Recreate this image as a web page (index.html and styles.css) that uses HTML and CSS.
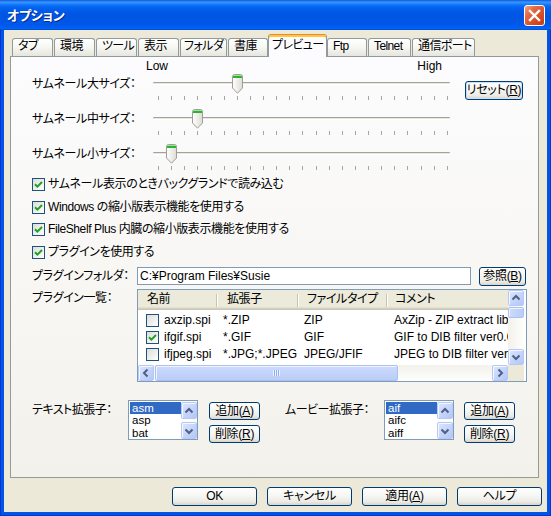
FILE: index.html
```html
<!DOCTYPE html>
<html lang="ja">
<head>
<meta charset="utf-8">
<title>オプション</title>
<link rel="stylesheet" href="styles.css">
</head>
<body>
<div class="window">
  <div class="titlebar">
    <span class="title">オプション</span>
    <div class="close"><svg width="19" height="19" viewBox="0 0 19 19"><path d="M5 5 L14 14 M14 5 L5 14" stroke="#fff" stroke-width="2.4" stroke-linecap="square"/></svg></div>
  </div>
  <div class="frame">
    <div class="client">
      <div class="tabs">
        <div class="tab">タブ</div>
        <div class="tab">環境</div>
        <div class="tab">ツール</div>
        <div class="tab">表示</div>
        <div class="tab w47">フォルダ</div>
        <div class="tab w40">書庫</div>
        <div class="tab active">プレビュー</div>
        <div class="tab w40">Ftp</div>
        <div class="tab w43">Telnet</div>
        <div class="tab w63">通信ポート</div>
      </div>
      <div class="page">
        <div class="scale"><span>Low</span><span>High</span></div>

        <div class="slider-row">
          <div class="slabel">サムネール大サイズ：</div>
          <div class="slider">
            <div class="track"></div>
            <div class="ticks"><i></i><i></i><i></i><i></i><i></i><i></i><i></i><i></i><i></i><i></i><i></i><i></i><i></i><i></i><i></i><i></i><i></i><i></i><i></i><i></i><i></i><i></i><i></i></div>
            <div class="thumb" style="left:79px"><svg width="11" height="20" viewBox="0 0 11 20"><defs><linearGradient id="tg1" x1="0" y1="0" x2="1" y2="0"><stop offset="0" stop-color="#FFFFFF"/><stop offset="1" stop-color="#DEDCD2"/></linearGradient></defs><path d="M0.5 2.5 Q0.5 0.5 2.5 0.5 H8.5 Q10.5 0.5 10.5 2.5 V14 L5.5 19.2 L0.5 14 Z" fill="url(#tg1)" stroke="#9E9D97"/><rect x="1" y="1" width="9" height="1" fill="#9BE49B"/><rect x="1" y="2" width="9" height="2" fill="#2DB32D"/></svg></div>
          </div>
          <button class="btn reset">リセット(<u>R</u>)</button>
        </div>

        <div class="slider-row">
          <div class="slabel">サムネール中サイズ：</div>
          <div class="slider">
            <div class="track"></div>
            <div class="ticks"><i></i><i></i><i></i><i></i><i></i><i></i><i></i><i></i><i></i><i></i><i></i><i></i><i></i><i></i><i></i><i></i><i></i><i></i><i></i><i></i><i></i><i></i><i></i></div>
            <div class="thumb" style="left:39px"><svg width="11" height="20" viewBox="0 0 11 20"><defs><linearGradient id="tg2" x1="0" y1="0" x2="1" y2="0"><stop offset="0" stop-color="#FFFFFF"/><stop offset="1" stop-color="#DEDCD2"/></linearGradient></defs><path d="M0.5 2.5 Q0.5 0.5 2.5 0.5 H8.5 Q10.5 0.5 10.5 2.5 V14 L5.5 19.2 L0.5 14 Z" fill="url(#tg2)" stroke="#9E9D97"/><rect x="1" y="1" width="9" height="1" fill="#9BE49B"/><rect x="1" y="2" width="9" height="2" fill="#2DB32D"/></svg></div>
          </div>
        </div>

        <div class="slider-row">
          <div class="slabel">サムネール小サイズ：</div>
          <div class="slider">
            <div class="track"></div>
            <div class="ticks"><i></i><i></i><i></i><i></i><i></i><i></i><i></i><i></i><i></i><i></i><i></i><i></i><i></i><i></i><i></i><i></i><i></i><i></i><i></i><i></i><i></i><i></i><i></i></div>
            <div class="thumb" style="left:13px"><svg width="11" height="20" viewBox="0 0 11 20"><defs><linearGradient id="tg3" x1="0" y1="0" x2="1" y2="0"><stop offset="0" stop-color="#FFFFFF"/><stop offset="1" stop-color="#DEDCD2"/></linearGradient></defs><path d="M0.5 2.5 Q0.5 0.5 2.5 0.5 H8.5 Q10.5 0.5 10.5 2.5 V14 L5.5 19.2 L0.5 14 Z" fill="url(#tg3)" stroke="#9E9D97"/><rect x="1" y="1" width="9" height="1" fill="#9BE49B"/><rect x="1" y="2" width="9" height="2" fill="#2DB32D"/></svg></div>
          </div>
        </div>

        <div class="checks">
          <div class="check"><span class="cbox"><svg width="11" height="11" viewBox="0 0 11 11"><path d="M2 5.2 L4.4 7.6 L9 3" fill="none" stroke="#21A121" stroke-width="2"/></svg></span><span>サムネール表示のときバックグランドで読み込む</span></div>
          <div class="check"><span class="cbox"><svg width="11" height="11" viewBox="0 0 11 11"><path d="M2 5.2 L4.4 7.6 L9 3" fill="none" stroke="#21A121" stroke-width="2"/></svg></span><span>Windows の縮小版表示機能を使用する</span></div>
          <div class="check"><span class="cbox"><svg width="11" height="11" viewBox="0 0 11 11"><path d="M2 5.2 L4.4 7.6 L9 3" fill="none" stroke="#21A121" stroke-width="2"/></svg></span><span>FileShelf Plus 内臓の縮小版表示機能を使用する</span></div>
          <div class="check"><span class="cbox"><svg width="11" height="11" viewBox="0 0 11 11"><path d="M2 5.2 L4.4 7.6 L9 3" fill="none" stroke="#21A121" stroke-width="2"/></svg></span><span>プラグインを使用する</span></div>
        </div>

        <div class="folder-row">
          <div class="flabel">プラグインフォルダ：</div>
          <div class="input">C:¥Program Files¥Susie</div>
          <button class="btn browse">参照(<u>B</u>)</button>
        </div>

        <div class="plugin-row">
          <div class="plabel">プラグイン一覧：</div>
          <div class="listview">
            <div class="lv-main">
              <div class="lv-view">
                <div class="lv-header">
                  <div class="hc c1">名前</div>
                  <div class="hc c2">拡張子</div>
                  <div class="hc c3">ファイルタイプ</div>
                  <div class="hc c4">コメント</div>
                </div>
                <div class="lv-body">
                  <div class="lv-row">
                    <div class="rc c1"><span class="cbox small"></span>axzip.spi</div>
                    <div class="rc c2">*.ZIP</div>
                    <div class="rc c3">ZIP</div>
                    <div class="rc c4">AxZip - ZIP extract library</div>
                  </div>
                  <div class="lv-row">
                    <div class="rc c1"><span class="cbox small"><svg width="11" height="11" viewBox="0 0 11 11"><path d="M2 5.2 L4.4 7.6 L9 3" fill="none" stroke="#21A121" stroke-width="2"/></svg></span>ifgif.spi</div>
                    <div class="rc c2">*.GIF</div>
                    <div class="rc c3">GIF</div>
                    <div class="rc c4">GIF to DIB filter ver0.05</div>
                  </div>
                  <div class="lv-row">
                    <div class="rc c1"><span class="cbox small"></span>ifjpeg.spi</div>
                    <div class="rc c2">*.JPG;*.JPEG</div>
                    <div class="rc c3">JPEG/JFIF</div>
                    <div class="rc c4">JPEG to DIB filter ver0.07</div>
                  </div>
                </div>
              </div>
              <div class="vscroll">
                <div class="sbtn"><svg width="14" height="14" viewBox="0 0 14 14"><path d="M3.5 8.5 L7 5 L10.5 8.5" fill="none" stroke="#4D6185" stroke-width="2"/></svg></div>
                <div class="vthumb"></div>
                <div class="strack"></div>
                <div class="sbtn"><svg width="14" height="14" viewBox="0 0 14 14"><path d="M3.5 5.5 L7 9 L10.5 5.5" fill="none" stroke="#4D6185" stroke-width="2"/></svg></div>
              </div>
            </div>
            <div class="lv-bottom">
              <div class="hscroll">
                <div class="sbtn"><svg width="14" height="14" viewBox="0 0 14 14"><path d="M8.5 3.5 L5 7 L8.5 10.5" fill="none" stroke="#4D6185" stroke-width="2"/></svg></div>
                <div class="hthumb"><span class="grip"></span></div>
                <div class="strack"></div>
                <div class="sbtn"><svg width="14" height="14" viewBox="0 0 14 14"><path d="M5.5 3.5 L9 7 L5.5 10.5" fill="none" stroke="#4D6185" stroke-width="2"/></svg></div>
              </div>
              <div class="corner"></div>
            </div>
          </div>
        </div>

        <div class="ext-row">
          <div class="group">
            <div class="elabel text-label">テキスト拡張子：</div>
            <div class="listbox">
              <div class="lb-items">
                <div class="lb-item sel">asm</div>
                <div class="lb-item">asp</div>
                <div class="lb-item">bat</div>
              </div>
              <div class="lb-scroll">
                <div class="sbtn"><svg width="14" height="14" viewBox="0 0 14 14"><path d="M3.5 8.5 L7 5 L10.5 8.5" fill="none" stroke="#4D6185" stroke-width="2"/></svg></div>
                <div class="strack"></div>
                <div class="sbtn"><svg width="14" height="14" viewBox="0 0 14 14"><path d="M3.5 5.5 L7 9 L10.5 5.5" fill="none" stroke="#4D6185" stroke-width="2"/></svg></div>
              </div>
            </div>
            <div class="ebtns">
              <button class="btn ebtn">追加(<u>A</u>)</button>
              <button class="btn ebtn">削除(<u>R</u>)</button>
            </div>
          </div>
          <div class="group movie">
            <div class="elabel movie-label">ムービー拡張子：</div>
            <div class="listbox">
              <div class="lb-items">
                <div class="lb-item sel">aif</div>
                <div class="lb-item">aifc</div>
                <div class="lb-item">aiff</div>
              </div>
              <div class="lb-scroll">
                <div class="sbtn"><svg width="14" height="14" viewBox="0 0 14 14"><path d="M3.5 8.5 L7 5 L10.5 8.5" fill="none" stroke="#4D6185" stroke-width="2"/></svg></div>
                <div class="strack"></div>
                <div class="sbtn"><svg width="14" height="14" viewBox="0 0 14 14"><path d="M3.5 5.5 L7 9 L10.5 5.5" fill="none" stroke="#4D6185" stroke-width="2"/></svg></div>
              </div>
            </div>
            <div class="ebtns">
              <button class="btn ebtn">追加(<u>A</u>)</button>
              <button class="btn ebtn">削除(<u>R</u>)</button>
            </div>
          </div>
        </div>
      </div>
      <div class="buttons">
        <button class="btn dlg">OK</button>
        <button class="btn dlg">キャンセル</button>
        <button class="btn dlg">適用(<u>A</u>)</button>
        <button class="btn dlg">ヘルプ</button>
      </div>
    </div>
  </div>
</div>
</body>
</html>
```

FILE: styles.css
```css
* { box-sizing: border-box; }
html, body { margin: 0; padding: 0; }
body {
  width: 551px;
  height: 516px;
  overflow: hidden;
  background: #ECE9D8;
  color: #000;
  font-family: "Liberation Sans", "Noto Sans CJK JP", sans-serif;
  font-size: 12px;
  line-height: 14px;
  font-feature-settings: "palt" 1;
}
.window {
  width: 551px;
  height: 516px;
  display: flex;
  flex-direction: column;
  background: #0055E5;
}
.titlebar {
  flex: none;
  height: 30px;
  display: flex;
  align-items: center;
  justify-content: space-between;
  padding: 0 6px 0 7px;
  background: linear-gradient(to bottom, #0A5AD8 0%, #3D95FF 7%, #2286FF 12%, #0B6FF8 18%, #0263EE 26%, #0058E6 40%, #0055E3 60%, #0057E9 80%, #005DF2 90%, #0266F8 94%, #005AE6 97%, #0048CC 100%);
}
.title {
  color: #fff;
  font-weight: bold;
  font-size: 13px;
  line-height: 16px;
  letter-spacing: -0.3px;
  text-shadow: 1px 1px 0 #0B2A8C;
  font-family: "Noto Sans CJK JP", sans-serif;
}
.close {
  width: 21px;
  height: 21px;
  border: 1px solid #fff;
  border-radius: 3px;
  display: flex;
  align-items: center;
  justify-content: center;
  background: linear-gradient(135deg, #F0A58A 0%, #E46A44 30%, #D6491F 70%, #C63A16 100%);
}
.frame {
  flex: 1;
  display: flex;
  padding: 0 4px 4px 4px;
  background: #0055E5;
  box-shadow: inset 1px 0 #0831D9, inset -1px 0 #0831D9, inset 0 -1px #0831D9;
}
.client {
  flex: 1;
  display: flex;
  flex-direction: column;
  background: #ECE9D8;
  padding: 4px 5px 0 6px;
}

/* tabs */
.tabs {
  flex: none;
  height: 22px;
  display: flex;
  align-items: flex-end;
  gap: 1px;
  padding-left: 2px;
  position: relative;
  z-index: 1;
}
.tab {
  flex: none;
  width: 41px;
  height: 18px;
  padding: 0 0 0 5px;
  border: 1px solid #919B9C;
  border-bottom: none;
  border-radius: 3px 3px 0 0;
  background: linear-gradient(#FFFFFF, #F6F6F2 50%, #E6E5DE);
  line-height: 15px;
  letter-spacing: -0.6px;
  white-space: nowrap;
  overflow: hidden;
}
.tab.w40 { width: 40px; }
.tab.w43 { width: 43px; }
.tab.w47 { width: 47px; padding-left: 3px; }
.tab.w63 { width: 63px; }
.tab.active {
  width: 59px;
  height: 23px;
  margin: 0 -1px -1px -1px;
  padding: 0 0 0 3px;
  background: #FCFCFE;
  border-top: 1px solid #E68B2C;
  box-shadow: inset 0 2px #FFC73C;
  line-height: 20px;
}

/* page */
.page {
  flex: none;
  height: 422px;
  margin-right: 3px;
  border: 1px solid #919B9C;
  background: linear-gradient(#FCFCFE, #F7F6F2 60%, #F2F1EC);
  padding: 2px 0 0 21px;
  display: flex;
  flex-direction: column;
}
.scale {
  display: flex;
  justify-content: space-between;
  height: 13px;
  width: 296px;
  margin-left: 114px;
}
.slider-row {
  display: flex;
  height: 35px;
}
.slabel {
  width: 121px;
  padding-top: 5px;
  white-space: nowrap;
  letter-spacing: -0.4px;
}
.slider {
  position: relative;
  width: 297px;
}
.track {
  position: absolute;
  left: 0;
  right: 0;
  top: 10px;
  height: 3px;
  border-radius: 1px;
  background: linear-gradient(#A3A29C 0 1px, #E9E7DE 1px 2px, #FFFFFF 2px);
}
.ticks {
  position: absolute;
  left: 5px;
  top: 24px;
  width: 290px;
  height: 4px;
  display: flex;
  justify-content: space-between;
}
.ticks i {
  display: block;
  width: 1px;
  height: 4px;
  background: #A8A59B;
}
.thumb {
  position: absolute;
  top: 2px;
  width: 11px;
  height: 20px;
}
.thumb svg { display: block; }

/* buttons */
.btn {
  font: inherit;
  font-feature-settings: "palt" 1;
  color: #000;
  padding: 0;
  margin: 0;
  border: 1px solid #003C74;
  border-radius: 3px;
  background: linear-gradient(#FFFFFF 0%, #F6F6F3 45%, #ECEBE6 80%, #D8D3C9 100%);
  line-height: 15px;
  text-align: center;
  white-space: nowrap;
  letter-spacing: -0.3px;
}
.btn u { text-underline-offset: 1px; }
.reset {
  width: 58px;
  height: 19px;
  margin: 9px 0 0 15px;
  box-shadow: inset 0 0 0 1px #CCDDF8;
}

/* checks */
.checks {
  display: flex;
  flex-direction: column;
}
.check {
  height: 22.5px;
  padding-top: 1px;
  display: flex;
  align-items: flex-start;
  line-height: 13px;
  white-space: nowrap;
  letter-spacing: -0.4px;
}
.cbox {
  flex: none;
  width: 13px;
  height: 13px;
  margin-right: 3px;
  border: 1px solid #1C5180;
  background: linear-gradient(135deg, #DCDCD7, #FFFFFF);
  display: flex;
}
.cbox svg { display: block; }

/* folder */
.folder-row {
  display: flex;
  align-items: center;
  height: 18px;
}
.flabel, .plabel {
  width: 105px;
  white-space: nowrap;
  letter-spacing: -0.4px;
}
.input {
  width: 334px;
  height: 18px;
  border: 1px solid #7F9DB9;
  background: #fff;
  padding: 0 2px;
  line-height: 16px;
  white-space: nowrap;
}
.browse {
  width: 47px;
  height: 19px;
  margin-left: 8px;
}

/* plugin list */
.plugin-row {
  display: flex;
  margin-top: 4px;
}
.plabel { padding-top: 2px; }
.listview {
  width: 390px;
  height: 93px;
  border: 1px solid #7F9DB9;
  background: #fff;
  padding-right: 2px;
  display: flex;
  flex-direction: column;
}
.lv-main {
  display: flex;
  height: 75px;
}
.lv-view {
  width: 370px;
  overflow: hidden;
}
.lv-header {
  display: flex;
  height: 20px;
  width: 460px;
  background: #EBEADB;
  box-shadow: inset 0 -1px #CBC7B8, inset 0 -2px #D6D2C2, inset 0 -3px #E2DECD;
}
.hc {
  position: relative;
  line-height: 19px;
  white-space: nowrap;
  letter-spacing: -0.4px;
}
.hc.c1 { width: 79px; padding-left: 9px; }
.hc.c2 { width: 81px; padding-left: 10px; }
.hc.c3 { width: 89px; padding-left: 9px; }
.hc.c4 { width: 211px; padding-left: 8px; }
.hc.c1::after, .hc.c2::after, .hc.c3::after {
  content: "";
  position: absolute;
  right: 0;
  top: 4px;
  height: 13px;
  width: 1px;
  background: #C7C5B2;
  box-shadow: 1px 0 #fff;
}
.lv-body {
  padding-top: 2px;
  width: 460px;
}
.lv-row {
  display: flex;
  height: 17px;
  line-height: 17px;
  white-space: nowrap;
}
.rc { overflow: hidden; }
.rc.c1 { width: 79px; padding-left: 8px; display: flex; align-items: center; }
.rc.c2 { width: 81px; padding-left: 6px; }
.rc.c3 { width: 89px; padding-left: 6px; }
.rc.c4 { width: 211px; padding-left: 7px; }
.cbox.small { margin-right: 5px; }

.vscroll {
  width: 16px;
  display: flex;
  flex-direction: column;
  background: linear-gradient(to right, #F3F1EC, #FEFEFB);
}
.sbtn {
  flex: none;
  width: 16px;
  height: 16px;
  border: 1px solid #B5C9F6;
  border-radius: 2px;
  background: linear-gradient(135deg, #DDE6FD 0%, #C6D5FB 50%, #B3C7F5 100%);
  box-shadow: inset 1px 1px #F4F7FF;
  display: flex;
  align-items: center;
  justify-content: center;
}
.sbtn svg { display: block; }
.vthumb {
  flex: none;
  height: 11px;
  margin-top: 1px;
  border: 1px solid #ACC1F3;
  border-radius: 2px;
  background: linear-gradient(to right, #CCDAFC, #BACDF7);
  box-shadow: inset 1px 1px #F0F4FF;
}
.strack { flex: 1; }
.lv-bottom {
  display: flex;
  height: 16px;
}
.hscroll {
  width: 370px;
  display: flex;
  background: linear-gradient(#F3F1EC, #FEFEFB);
}
.hthumb {
  width: 243px;
  margin-left: 1px;
  border: 1px solid #ACC1F3;
  border-radius: 2px;
  background: linear-gradient(#CCDAFC, #BACDF7);
  box-shadow: inset 1px 1px #F0F4FF;
  display: flex;
  align-items: center;
  justify-content: center;
}
.grip {
  width: 7px;
  height: 6px;
  background: repeating-linear-gradient(to right, #EEF4FE 0 1px, #8CB0F8 1px 2px);
}
.corner {
  width: 16px;
  background: #ECE9D8;
}

/* extension lists */
.ext-row {
  display: flex;
  margin-top: 18px;
}
.group {
  display: flex;
}
.group.movie { margin-left: 25px; }
.elabel {
  padding-top: 3px;
  white-space: nowrap;
  letter-spacing: -0.5px;
}
.text-label { width: 96px; }
.movie-label { width: 99px; }
.listbox {
  width: 70px;
  height: 40px;
  border: 1px solid #7F9DB9;
  background: #fff;
  display: flex;
  padding: 0 0 0 1px;
}
.lb-items {
  flex: 1;
  padding-top: 0.5px;
}
.lb-item {
  height: 12.5px;
  line-height: 12.5px;
  font-size: 11.5px;
  padding-left: 2px;
  overflow: hidden;
}
.lb-item.sel {
  background: #316AC5;
  color: #fff;
}
.lb-scroll {
  width: 16px;
  display: flex;
  flex-direction: column;
  padding: 1px 0 0 0;
  background: #FCFCFA;
}
.lb-scroll .sbtn { height: 17px; }
.ebtns {
  display: flex;
  flex-direction: column;
  gap: 5px;
  margin: 2px 0 0 11px;
}
.group.movie .ebtns { margin-left: 10px; }
.ebtn {
  width: 51px;
  height: 18px;
}

/* dialog buttons */
.buttons {
  display: flex;
  justify-content: flex-end;
  gap: 10px;
  margin-top: 9px;
}
.dlg {
  width: 85px;
  height: 19px;
}
```
